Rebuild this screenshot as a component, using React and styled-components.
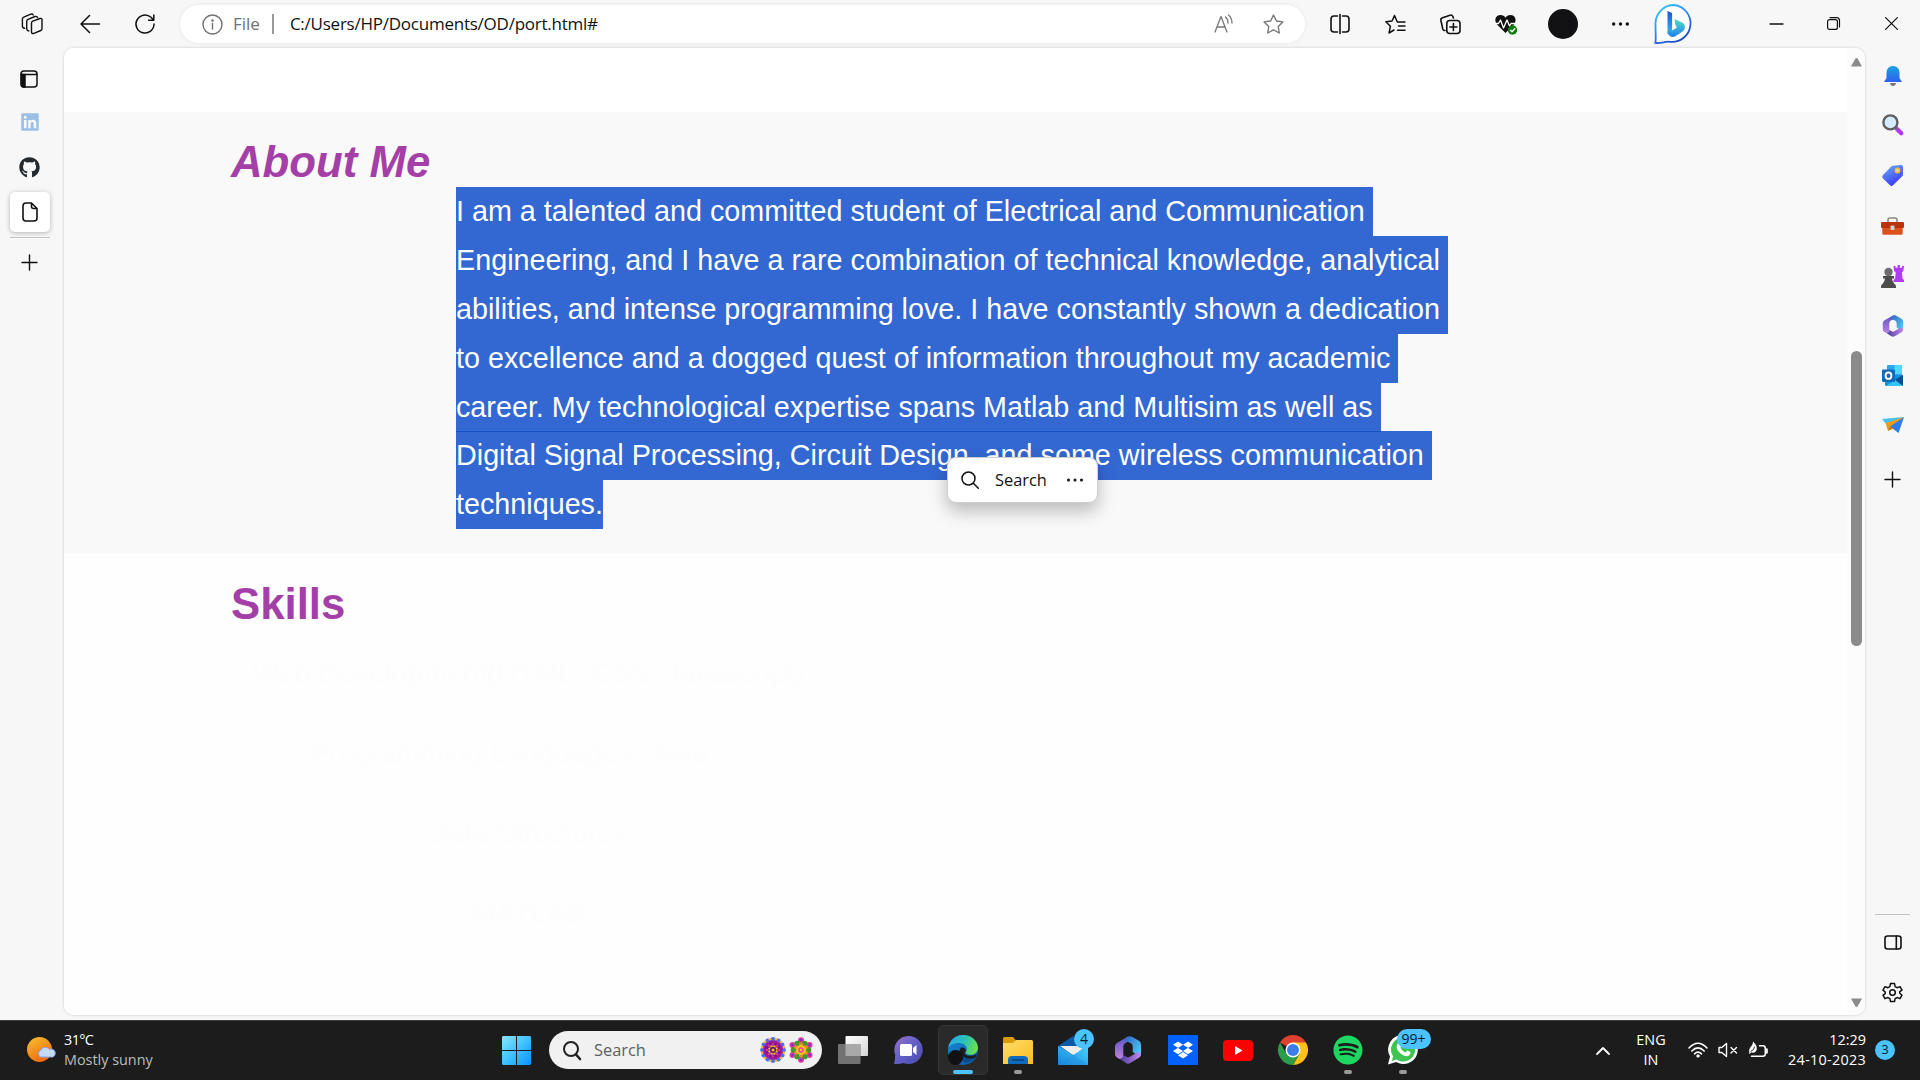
import React from "react";
import styled, { createGlobalStyle } from "styled-components";
import { FaLinkedin, FaGithub, FaSpotify, FaDropbox } from "react-icons/fa";

const UI = `"Open Sans", "Noto Sans", sans-serif`;

const Global = createGlobalStyle`
  * { box-sizing: border-box; }
  html, body { margin: 0; padding: 0; overflow: hidden; }
  body { background: #f7f7f7; font-family: ${UI}; color: #111; }
  svg { display: block; flex: none; overflow: visible; }
`;

const Screen = styled.div`
  width: 1920px;
  height: 1080px;
  display: flex;
  flex-direction: column;
  background: #f7f7f7;
`;

/* ---------- browser header ---------- */
const Header = styled.header`
  height: 48px;
  display: flex;
  align-items: flex-start;
`;
const Cell = styled.div`
  width: ${(p) => p.$w}px;
  height: 47px;
  display: flex;
  align-items: center;
  justify-content: center;
`;
const AddressBar = styled.div`
  width: 1125px;
  height: 38px;
  margin: 5px 0 0 6px;
  padding: 0 21px 0 22px;
  border-radius: 19px;
  background: #fff;
  box-shadow: 0 0 4px rgba(0, 0, 0, 0.07);
  display: flex;
  align-items: center;
`;
const Scheme = styled.span`
  margin-left: 10px;
  font-size: 17px;
  line-height: 37px;
  height: 38px;
  color: #707070;
`;
const Bar = styled.span`
  width: 2px;
  height: 20px;
  margin: 0 16px 0 12px;
  background: #9a9a9a;
`;
const Address = styled.span`
  flex: 1;
  font-size: 17px;
  letter-spacing: -0.24px;
  line-height: 37px;
  height: 38px;
  color: #111;
`;
const AddressActions = styled.div`
  display: flex;
  gap: 30px;
  align-items: center;
`;
const Spacer = styled.div`
  flex: 1;
`;
const Avatar = styled.div`
  width: 30px;
  height: 30px;
  border-radius: 50%;
  background: #121114;
`;

/* ---------- middle ---------- */
const Middle = styled.div`
  height: 972px;
  display: flex;
  align-items: flex-start;
`;
const TabRail = styled.nav`
  width: 64px;
  height: 972px;
  padding: 9px 4px 0 0;
  display: flex;
  flex-direction: column;
  align-items: center;
`;
const RailSlot = styled.div`
  height: ${(p) => p.$h}px;
  width: 40px;
  padding-right: ${(p) => p.$inset || 0}px;
  display: flex;
  align-items: center;
  justify-content: center;
`;
const ActiveTab = styled.div`
  width: 40px;
  height: 40px;
  border-radius: 5px;
  background: #fff;
  box-shadow: 0 1px 5px rgba(0, 0, 0, 0.28);
  display: flex;
  align-items: center;
  justify-content: center;
`;
const RailRule = styled.div`
  width: ${(p) => p.$w}px;
  height: 1px;
  margin-top: ${(p) => p.$top}px;
  background: #c3c3c3;
`;
const Viewport = styled.main`
  width: 1801px;
  height: 967px;
  border-radius: 10px;
  overflow: hidden;
  background: #fff;
  box-shadow: 0 0 3px rgba(0, 0, 0, 0.2);
  display: flex;
`;
const Page = styled.div`
  flex: 1;
  background: #fefefe;
  font-family: "Liberation Sans", Arial, sans-serif;
`;
const TopGap = styled.div`
  height: 64px;
  background: #fff;
`;
const Section = styled.section`
  height: ${(p) => p.$h}px;
  padding: 24px 0 0 167px;
  background: ${(p) => p.$bg};
`;
const Heading = styled.h2`
  margin: 0;
  height: 51px;
  line-height: 51px;
  font-size: 43.75px;
  font-weight: bold;
  font-style: ${(p) => (p.$italic ? "italic" : "normal")};
  color: #a43fa8;
`;
const Paragraph = styled.div`
  margin-left: 225px;
  font-size: 28.742px;
  color: #fff;
  display: flex;
  flex-direction: column;
  align-items: flex-start;
`;
const Line = styled.span`
  position: relative;
  z-index: ${(p) => (p.$overlap ? 1 : 0)};
  height: 49px;
  line-height: 49px;
  margin-bottom: ${(p) => (p.$overlap ? -1 : 0)}px;
  white-space: pre;
  background: #3367d1;
  box-shadow: ${(p) => (p.$overlap ? "inset 0 -1px 0 #1550c4" : "none")};
`;
const SkillList = styled.ul`
  list-style: none;
  width: 600px;
  margin: 20px 0 0 -3px;
  padding: 0;
  font-size: 28.65px;
  color: #fdfdfd;
  text-align: center;
`;
const Skill = styled.li`
  height: 80px;
  line-height: 49px;
`;
const ScrollTrack = styled.div`
  width: 18px;
  background: #fcfcfc;
  display: flex;
  flex-direction: column;
  align-items: center;
  padding-top: 10px;
`;
const ScrollThumb = styled.div`
  width: 11px;
  height: 295px;
  margin: 284px 0 352px;
  border-radius: 6px;
  background: #8b8b8b;
`;
const SideRail = styled.aside`
  width: 55px;
  height: 972px;
  padding: 3px 0 0 0;
  display: flex;
  flex-direction: column;
  align-items: center;
`;
const SideSlot = styled.div`
  height: ${(p) => p.$h || 50}px;
  display: flex;
  align-items: center;
  justify-content: center;
`;

/* ---------- selection popup ---------- */
const Popup = styled.div`
  position: absolute;
  left: 947px;
  top: 457px;
  z-index: 5;
  width: 151px;
  height: 46px;
  padding: 0 13px;
  border-radius: 9px;
  background: #fff;
  border: 1px solid #cfcfcf;
  box-shadow: 0 8px 18px rgba(0, 0, 0, 0.26);
  display: flex;
  align-items: center;
  font-size: 16.4px;
`;
const PopupLabel = styled.span`
  margin: 0 20px 0 16px;
  line-height: 43px;
  height: 44px;
`;

/* ---------- taskbar ---------- */
const Taskbar = styled.footer`
  height: 60px;
  background: #1c1c1c;
  border-top: 1px solid #3b3f40;
  display: flex;
  align-items: center;
  color: #fff;
`;
const Weather = styled.div`
  width: 489px;
  padding-left: 26px;
  gap: 9px;
  display: flex;
  align-items: center;
`;
const TwoLines = styled.div`
  display: flex;
  flex-direction: column;
  align-items: ${(p) => p.$align || "flex-start"};
  width: ${(p) => p.$w || "auto"};
  margin-left: ${(p) => p.$left || 0}px;
  padding-bottom: 2px;
  line-height: 20px;
  font-size: 14.4px;
  color: #fff;
`;
const Muted = styled.span`
  color: #bdbdbd;
`;
const Spaced = styled.span`
  letter-spacing: ${(p) => p.$ls}px;
`;
const AppCell = styled.div`
  width: 55px;
  height: 59px;
  padding: 0 ${(p) => (p.$center ? 0 : 1)}px 1px 0;
  position: relative;
  display: flex;
  align-items: center;
  justify-content: center;
`;
const AppTile = styled.div`
  width: 50px;
  height: 50px;
  border-radius: 5px;
  background: #2a2a2a;
  border: 1px solid #353535;
  display: flex;
  align-items: center;
  justify-content: center;
`;
const Indicator = styled.i`
  position: absolute;
  left: 27px;
  bottom: 6px;
  transform: translateX(-50%);
  width: ${(p) => (p.$active ? 20 : 8)}px;
  height: 4px;
  border-radius: 2px;
  background: ${(p) => (p.$active ? "#4cc2ff" : "#9a9a9a")};
`;
const Badge = styled.b`
  position: absolute;
  left: ${(p) => p.$left}px;
  top: 8px;
  height: 20px;
  width: ${(p) => p.$w}px;
  border-radius: 10px;
  background: #4cc2ff;
  color: #0a1a24;
  font-weight: 400;
  font-size: 14px;
  line-height: 20px;
  text-align: center;
`;
const SearchBox = styled.div`
  width: 273px;
  height: 38px;
  margin: 0 4px 1px 5px;
  padding: 0 9px 0 14px;
  border-radius: 19px;
  background: #f1f1f1;
  display: flex;
  align-items: center;
`;
const SearchLabel = styled.span`
  flex: 1;
  margin-left: 13px;
  font-size: 16.4px;
  line-height: 37px;
  height: 38px;
  color: #5f5f5f;
`;
const Flowers = styled.div`
  display: flex;
  gap: 3px;
`;
const Tray = styled.div`
  display: flex;
  align-items: center;
  gap: 10px;
  margin: 0 19px 1px 22px;
`;
const Count = styled.span`
  width: 20px;
  height: 20px;
  margin: 0 25px 1px 9px;
  border-radius: 50%;
  background: #4cc2ff;
  color: #0a1a24;
  font-size: 12.5px;
  line-height: 20px;
  text-align: center;
`;

/* ---------- icons ---------- */
const Svg = ({ w, h, vb, sw = 1.5, c = "#111", children }) => (
  <svg width={w} height={h || w} viewBox={vb || `0 0 ${w} ${h || w}`} fill="none" stroke={c} strokeWidth={sw} strokeLinecap="round" strokeLinejoin="round">
    {children}
  </svg>
);
const Dots = ({ w = 16, r = 1.7 }) => (
  <Svg w={w} h={4}>
    {[r, w / 2, w - r].map((x) => <circle key={x} cx={x} cy="2" r={r} fill="#111" stroke="none" />)}
  </Svg>
);
const Plus = () => (
  <Svg w={17} sw={1.4}><path d="M8.5 1v15M1 8.5h15" /></Svg>
);
const WorkspacesIcon = () => (
  <Svg w={22} h={22} sw={1.4}>
    <path d="M10.500 10q0-1.400 1.300-1.900l7.200-2.600q2-.5 2 1.300v9q0 1.200-1.200 1.700l-6.900 2.800q-2.400.8-2.400-1.200z" />
    <path d="M7.800 18q-2.100-.3-2.100-2V8.200q0-1.300 1.300-1.800L14 3.500q2-.5 2.600 1" />
    <path d="M3.600 15.300q-2.200-.3-2.200-2V6q0-1.300 1.300-1.800L9.800 1.200q1.700-.5 2.400.8" />
  </Svg>
);
const MagnifierEmoji = () => (
  <Svg w={22} h={22} sw={2.4}>
    <path d="m15 15 4.300 4.300" stroke="#b235f5" strokeWidth="4.200" />
    <path d="m13 13 1.500 1.500" stroke="#777" />
    <circle cx="8.400" cy="8.400" r="7" fill="#d3ecff" stroke="#606060" />
  </Svg>
);
const M365 = ({ s = 26 }) => (
  <svg width={s} height={s} viewBox="0 0 26 28">
    <defs>
      <linearGradient id="ma" x1="0" y1="0" x2="0" y2="1"><stop stopColor="#5a57c9" /><stop offset="1" stopColor="#bd7fe0" /></linearGradient>
      <linearGradient id="mb" x1="0" y1="0" x2="1" y2="1"><stop stopColor="#2f61c6" /><stop offset="1" stopColor="#57d6fb" /></linearGradient>
      <linearGradient id="mc" x1="0" y1="0" x2="1" y2="0"><stop stopColor="#473a9c" /><stop offset="1" stopColor="#c48be8" /></linearGradient>
    </defs>
    <path d="M13 .6 2.300 6.700Q0 8 0 10.600V18q0 2.500 2.200 3.700l2.500 1.300q3.600 0 3.600-4V10.600q0-2.400 2.100-3.600L15 4.400z" fill="url(#ma)" />
    <path d="M13 .6q2-1 4 .2l6.900 4Q26 6.100 26 8.600V17q0 2.300-1.500 3.400L17.700 16v-5.300q0-2.400-2.100-3.600L9.500 4.800q0-2.700 3.500-4.200z" fill="url(#mb)" />
    <path d="M4.700 23q3.600 0 3.600-4l3 1.700q1.700 1 3.400 0L23 16q3 0 3 2.600 0 2-2 3.200l-8.800 5.300q-2.200 1.200-4.400 0z" fill="url(#mc)" />
  </svg>
);
const Bing = () => (
  <svg width="40" height="40" viewBox="0 0 40 40">
    <defs>
      <linearGradient id="br" x1="0" y1="0" x2=".6" y2="1"><stop stopColor="#35d3f4" /><stop offset=".5" stopColor="#2f8df3" /><stop offset="1" stopColor="#1b49c8" /></linearGradient>
      <linearGradient id="bb" x1="0" y1="0" x2="0" y2="1"><stop stopColor="#1e55e0" /><stop offset="1" stopColor="#2fb6f0" /></linearGradient>
      <linearGradient id="bc" x1="0" y1="0" x2="0" y2="1"><stop stopColor="#54dfc2" /><stop offset="1" stopColor="#1f7df0" /></linearGradient>
    </defs>
    <path d="M20 1a18.500 18.500 0 1 1-4 36.800c-5-.8-8 1.800-14.700 1.100.9-3 .2-8 .2-18.900A18.500 18.500 0 0 1 20 1z" fill="#fff" stroke="url(#br)" strokeWidth="1.800" />
    <path d="m13.500 7 4.600 2v17.500l-4.600 3.400z" fill="url(#bb)" />
    <path d="m20.500 15 7.700 3.600q3 1.600 2.700 5-.2 2.600-2.600 4.200l-6.600 4.300q-3 1.600-5.700.2-2.500-1.500-2.500-4.300l1-2.500 3.600 1 4.700-2.700-1.700-3.800z" fill="url(#bc)" />
  </svg>
);
const Edge = () => (
  <svg width="30" height="30" viewBox="0 0 30 30">
    <defs>
      <linearGradient id="ea" x1="0" y1=".2" x2="1" y2=".5"><stop stopColor="#2aa6ee" /><stop offset=".55" stopColor="#2bc3b4" /><stop offset="1" stopColor="#6be04a" /></linearGradient>
      <linearGradient id="eb" x1="0" y1="0" x2="1" y2="1"><stop stopColor="#1689d8" /><stop offset="1" stopColor="#0c59a4" /></linearGradient>
    </defs>
    <circle cx="15" cy="15" r="15" fill="url(#eb)" />
    <path d="M.3 13C1.300 5.500 7.500 0 15 0c9 0 15 6.500 15 12.500 0 4.700-3.500 7.300-7.400 7.300-3 0-5-1-5-2.200 0-.9 1.200-1.400 1.200-3.600 0-3-3-6-8-6-5.500 0-9 2.500-10.500 5z" fill="url(#ea)" />
    <path d="M12 14c-3 4-1 12 6.500 14 4-1 8-4 9.300-7-5 2.500-12.500 1.500-13.500-3.500-.3-2 .5-3 .5-3z" fill="#0b4a8c" />
    <path d="M13.500 12.500c3 0 4.500 1.500 4.300 3.500-.2 1-1.200 1.300-1.200 2.200 0 1.600 3.500 3.300 8 2.400 2-.4 3.500-1.100 4.700-2.200l-2.100 4.400c-6 2.200-14-.4-15.500-5.800 0-2 .4-3.600 1.800-4.500z" fill="#1c1c1c" />
    <circle cx="7.500" cy="22.500" r="7.500" fill="#121114" />
  </svg>
);
const WindowsLogo = () => (
  <svg width="29" height="29" viewBox="0 0 29 29">
    <defs><linearGradient id="wl" gradientUnits="userSpaceOnUse" x1="0" y1="0" x2="29" y2="29"><stop stopColor="#8be4ff" /><stop offset=".5" stopColor="#3fc1ff" /><stop offset="1" stopColor="#0a93fa" /></linearGradient></defs>
    <path d="M1 0h13v14H0V1zM15 0h13l1 1v13H15zM0 15h14v14H1l-1-1zM15 15h14v13l-1 1H15z" fill="url(#wl)" />
  </svg>
);
const petals = (n, r, size, fill, cx = 13, off = 0) =>
  Array.from({ length: n }, (_, i) => {
    const a = ((i * 360) / n + off) * (Math.PI / 180);
    return <circle key={fill + i} cx={cx + r * Math.sin(a)} cy={13 - r * Math.cos(a)} r={size} fill={fill} />;
  });
const FlowerA = () => (
  <svg width="26" height="26" viewBox="0 0 26 26">
    {petals(12, 10.6, 2.3, "#4a6cf0")}
    {petals(12, 11.2, 1.3, "#f5b921", 13, 15)}
    {petals(12, 7.6, 2.5, "#a3179a", 13, 15)}
    <circle cx="13" cy="13" r="7.500" fill="#7b1280" />
    {petals(8, 6, 1.2, "#d935a6")}
    {petals(8, 3.8, 1.2, "#f5c021", 13, 22)}
    <circle cx="13" cy="13" r="3" fill="#5a1a70" />
    <circle cx="13" cy="13" r="1.500" fill="#f5c021" />
  </svg>
);
const FlowerB = () => (
  <svg width="24" height="26" viewBox="0 0 24 26">
    {petals(6, 9.8, 3, "#e0359f", 12)}
    {petals(6, 10, 1.2, "#7a2fd0", 12)}
    {petals(6, 7.4, 2.9, "#3f9a28", 12, 30)}
    {petals(6, 5.6, 2, "#f08a2a", 12)}
    <circle cx="12" cy="13" r="5" fill="#f5c021" />
    <circle cx="12" cy="13" r="2.700" fill="#ee3f9f" />
    <circle cx="12" cy="13" r="1.200" fill="#f7d04a" />
  </svg>
);
const Mail = () => (
  <svg width="30" height="29" viewBox="0 0 30 29">
    <defs><linearGradient id="ml" x1="0" y1="1" x2="1" y2="0"><stop stopColor="#1a7fd6" /><stop offset=".6" stopColor="#34b4f0" /><stop offset="1" stopColor="#45d3f8" /></linearGradient></defs>
    <path d="M0 10 15 0l15 10v6H0z" fill="#0b5aa9" />
    <path d="M2 10h26L16 20z" fill="#eee" />
    <path d="m0 10 15 9 15-9v19H0z" fill="url(#ml)" />
    <path d="m0 29 15-10.500L30 29z" fill="#1f8fe0" opacity=".45" />
  </svg>
);
const Chrome = () => (
  <svg width="30" height="30" viewBox="0 0 30 30">
    <path d="M15 15 2 7.500A15 15 0 0 1 28 7.500z" fill="#e0402f" />
    <path d="M15 7.500h13A15 15 0 0 1 15 30l6.500-11.200z" fill="#fbc116" />
    <path d="M2 7.500A15 15 0 0 0 15 30l6.500-11.200L8.500 18.800z" fill="#2c9c49" />
    <circle cx="15" cy="15" r="7.500" fill="#fff" />
    <circle cx="15" cy="15" r="6" fill="#3b7ded" />
  </svg>
);
const Folder = () => (
  <svg width="30" height="27" viewBox="0 0 30 27">
    <defs><linearGradient id="fo" x1="0" y1="0" x2="1" y2="1"><stop stopColor="#ffdd6b" /><stop offset="1" stopColor="#fbbc1f" /></linearGradient></defs>
    <path d="M0 8V1.500Q0 0 1.500 0H10l3 3.500V8z" fill="#dc9a08" />
    <path d="M0 6h10l3-3h15.500Q30 3 30 4.500V27H0z" fill="url(#fo)" />
    <path d="M5 27v-4q0-4 4-4h12q4 0 4 4v4z" fill="#0f6cbd" />
    <path d="M9.500 23h11" stroke="#0a3f78" strokeWidth="1.500" strokeLinecap="round" />
  </svg>
);

const LINES = [
  "I am a talented and committed student of Electrical and Communication ",
  "Engineering, and I have a rare combination of technical knowledge, analytical ",
  "abilities, and intense programming love. I have constantly shown a dedication ",
  "to excellence and a dogged quest of information throughout my academic ",
  "career. My technological expertise spans Matlab and Multisim as well as ",
  "Digital Signal Processing, Circuit Design, and some wireless communication ",
  "techniques.",
];
const SKILLS = ["Web Development(HTML, CSS, Javascript)", "Programming Languages: Java, C", "Data Structures", "MATLAB"];

function BrowserHeader() {
  return (
    <Header>
      <Cell $w={64}><WorkspacesIcon /></Cell>
      <Cell $w={51}><Svg w={20} h={20}><path d="M1 10h18.500M9.500 1.500 1 10l8.500 8.500" /></Svg></Cell>
      <Cell $w={59}><Svg w={20} h={20}><path d="M19 10a9 9 0 1 1-3-6.700L18.600 6M18.800 1v5.200h-5.200" /></Svg></Cell>
      <AddressBar>
        <Svg w={21} c="#707070" sw={1.4}><circle cx="10.500" cy="10.500" r="9.500" /><path d="M10.500 9.500v5.500" /><circle cx="10.500" cy="6.500" r=".6" fill="#707070" /></Svg>
        <Scheme>File</Scheme>
        <Bar />
        <Address>C:/Users/HP/Documents/OD/port.html#</Address>
        <AddressActions>
          <Svg w={19} h={20} c="#777" sw={1.3}><path d="m1 18 6-15.500L13 18M3 13h8M11.500 3q2.500 2 2.500 6M14.500 1q3.500 3 3.500 8" /></Svg>
          <Svg w={21} h={20} c="#777" sw={1.4}><path d="m10.500 1 2.900 6 6.500.9-4.700 4.600 1.100 6.500-5.800-3.100L4.700 19l1.100-6.500L1.100 7.900l6.500-.9z" /></Svg>
        </AddressActions>
      </AddressBar>
      <Cell $w={69}><Svg w={20} h={20} sw={1.6}><path d="M7.500 2H4Q1 2 1 5v10q0 3 3 3h3.500M12.500 2H16q3 0 3 3v10q0 3-3 3h-3.500M10 .5v19" /></Svg></Cell>
      <Cell $w={43}><Svg w={21} h={20}><path d="M12.300 8 9.500 1.500 7 7 .8 7.800l4.600 4.500L4 19l5-3M12.500 8H20M13.500 12H20M12.500 16.200H20" /></Svg></Cell>
      <Cell $w={67}><Svg w={21} h={20} sw={1.6}><path d="M5 16.500q-1.700.2-2.200-1.500L.9 6.500Q.5 4.300 2.600 3.700L10 1.200q2-.6 2.900 1.300l.5 1.500" /><rect x="6.800" y="6.500" width="13.200" height="13" rx="3" /><path d="M13.400 9.500v7M9.900 13h7" /></Svg></Cell>
      <Cell $w={44}>
        <Svg w={23} h={20} c="none">
          <path d="M10.500 19 2 10.500C-1.500 6 1 1 5.500 1c2.200 0 4 1 5 2.700C11.500 2 13.200 1 15.400 1c4.600 0 7 5 3.600 9.500z" fill="#111" />
          <path d="M0 9.500h3.500l2-3.500 3 8 3.500-8 2.500 6 1.500-2.500h5" stroke="#fff" strokeWidth="1.300" />
          <circle cx="17.500" cy="16" r="4.700" fill="#107c10" />
          <path d="m15.500 16.200 1.500 1.500 2.800-3" stroke="#fff" strokeWidth="1.300" />
        </Svg>
      </Cell>
      <Cell $w={69}><Avatar /></Cell>
      <Cell $w={46}><Dots w={17} /></Cell>
      <Cell $w={61}><Bing /></Cell>
      <Spacer />
      <Cell $w={56}><Svg w={13} h={2} sw={1.3}><path d="M0 1h13" /></Svg></Cell>
      <Cell $w={59}><Svg w={13} h={13} sw={1.2}><rect x=".6" y="2.600" width="9.800" height="9.800" rx="2" /><path d="M3 .6h6.500q3 0 3 3V10" /></Svg></Cell>
      <Cell $w={57}><Svg w={13} h={13} sw={1.2}><path d="m.6.6 11.800 11.800M12.400.6.600 12.400" /></Svg></Cell>
    </Header>
  );
}

function LeftRail() {
  return (
    <TabRail>
      <RailSlot $h={44} $inset={2}><Svg w={18} h={18}><rect x="1" y="1" width="16" height="16" rx="3" /><path d="M1 4.500h16" /><path d="M1.500 4.500H5V17H3.500q-2 0-2-2z" fill="#111" /></Svg></RailSlot>
      <RailSlot $h={42}><FaLinkedin size={20} color="#9bc0e6" /></RailSlot>
      <RailSlot $h={48} $inset={1}><FaGithub size={21} color="#24292e" /></RailSlot>
      <RailSlot $h={1} />
      <ActiveTab><Svg w={16} h={20} sw={1.6}><path d="M9.500 1H4Q1 1 1 4v12q0 3 3 3h8q3 0 3-3V6.500zM9.500 1v3.500q0 2 2 2H15" /></Svg></ActiveTab>
      <RailRule $w={40} $top={5} />
      <RailSlot $h={49} $inset={1}><Plus /></RailSlot>
    </TabRail>
  );
}

function RightRail() {
  return (
    <SideRail>
      <SideSlot>
        <svg width="18" height="20" viewBox="0 0 18 20">
          <defs><linearGradient id="be" x1="0" y1="0" x2="0" y2="1"><stop stopColor="#1ba0e2" /><stop offset="1" stopColor="#2d62ef" /></linearGradient></defs>
          <path d="M6 17h6q-.5 3-3 3t-3-3z" fill="#777" /><path d="M9 0q6.500.3 6.500 7v5L18 16H0l2.500-4V7Q2.500.3 9 0z" fill="url(#be)" />
        </svg>
      </SideSlot>
      <SideSlot $h={48}><MagnifierEmoji /></SideSlot>
      <SideSlot $h={52}>
        <svg width="21" height="21" viewBox="0 0 21 21">
          <defs><linearGradient id="tg" x1="0" y1="0" x2=".5" y2="1"><stop stopColor="#67b2fb" /><stop offset="1" stopColor="#3f3bf2" /></linearGradient></defs>
          <path d="M11 .8 19 0q2 0 2 2v7.500q0 1-.8 1.800L11 20.300q-1.500 1.200-3 0L.8 13.200q-1.300-1.500 0-3L9 1.700q.8-.8 2-.9z" fill="url(#tg)" />
          <circle cx="15.500" cy="5.500" r="2.200" fill="#ead7a0" stroke="#f2bd1d" strokeWidth="1.500" />
        </svg>
      </SideSlot>
      <SideSlot>
        <svg width="23" height="18" viewBox="0 0 23 18">
          <path d="M7 5V3q0-2 2-2h5q2 0 2 2v2" fill="none" stroke="#8a8a8a" strokeWidth="1.600" />
          <rect x="1.300" y="8" width="20.400" height="9.700" rx="1.500" fill="#dd511d" /><rect x="0" y="5" width="23" height="6" rx="1.200" fill="#b9330b" />
          <rect x="9.500" y="8.500" width="4" height="4.500" rx="1" fill="#d0d0d0" />
        </svg>
      </SideSlot>
      <SideSlot>
        <svg width="23" height="23" viewBox="0 0 23 23">
          <path d="M12.500 1h2v1.800h2.100V0h2.300v2.800H21V1h2l-.7 5-1.400 1.300.6 6.200L23 15v2H12.500v-2l1.700-1.500.5-6.200L13 6z" fill="#b13cf5" />
          <circle cx="7.500" cy="7" r="4.200" fill="#6d6d6d" /><path d="M2 11h11v2.500h-2q0 3 2.500 5.500 1.500.5 1.500 2.500V23H0v-1.500Q0 19.500 1.500 19 4 16.500 4 13.500H2z" fill="#4d4d4d" />
        </svg>
      </SideSlot>
      <SideSlot><M365 s={22} /></SideSlot>
      <SideSlot $h={49}>
        <svg width="21" height="21" viewBox="0 0 21 21">
          <rect x="5" y="0" width="15" height="12" rx="1" fill="#28a8ea" /><rect x="12.500" y="0" width="7.500" height="9" fill="#50d9ff" />
          <path d="M3 10h18v9.500q0 1.500-1.500 1.500h-15Q3 21 3 19.500z" fill="#1490df" /><path d="m21 10-9 5.500L21 21z" fill="#0a4f93" /><path d="m4 21 9-6 8 6z" fill="#36c3f2" />
          <rect y="4.500" width="13" height="12.500" rx="1.200" fill="#0f6cbd" /><ellipse cx="6.500" cy="10.700" rx="2.900" ry="3.200" fill="none" stroke="#fff" strokeWidth="1.900" />
        </svg>
      </SideSlot>
      <SideSlot $h={49}>
        <svg width="22" height="16" viewBox="0 0 22 16">
          <path d="M0 2 22 0 5 8z" fill="#41c4f3" /><path d="m3.500 6 2.500 8L9 10.500 22 0z" fill="#f29b14" /><path d="M8 9.500 22 0l-5.500 16z" fill="#2b7de8" /><path d="m6 14 2-4.500 3.500 2z" fill="#c97908" />
        </svg>
      </SideSlot>
      <SideSlot $h={60}><Plus /></SideSlot>
      <Spacer />
      <RailRule $w={35} $top={0} />
      <SideSlot $h={55}><Svg w={18} h={15} sw={1.6}><rect x="1" y="1" width="16" height="13" rx="2.500" /><path d="M12.300 1v13" /></Svg></SideSlot>
      <SideSlot $h={44}>
        <Svg w={21} h={21} vb="0 0 24 24" sw={1.7}>
          <circle cx="12" cy="12" r="3.200" />
          <path d="M9.700 1.800 9 5.200 6.800 6.500l-3.400-1.200L1.100 9.300 3.700 11.600v1.800L1.100 15.100l2.300 3.900 3.400-1.200L9 19.100l.7 3.300h4.600l.7-3.300 2.200-1.300 3.400 1.200 2.300-3.900-2.600-2.300v-1.800l2.600-1.700-2.300-4-3.400 1.200L15 5.200l-.7-3.400z" />
        </Svg>
      </SideSlot>
      <SideSlot $h={6} />
    </SideRail>
  );
}

function WindowsTaskbar() {
  return (
    <Taskbar>
      <Weather>
        <svg width="29" height="28" viewBox="0 0 29 28">
          <defs><linearGradient id="su" x1="0" y1="0" x2=".6" y2="1"><stop stopColor="#f3c231" /><stop offset="1" stopColor="#f26a10" /></linearGradient></defs>
          <circle cx="13.500" cy="12.500" r="12.500" fill="url(#su)" />
          <path d="M14.500 20a4 4 0 0 1 .3-7 5 5 0 0 1 8.500-.6 4 4 0 0 1 3.500 7.600z" fill="#c4daf9" stroke="#83a5e6" strokeWidth="1" />
        </svg>
        <TwoLines><Spaced $ls={-0.6}>31°C</Spaced><Muted>Mostly sunny</Muted></TwoLines>
      </Weather>
      <AppCell $center><WindowsLogo /></AppCell>
      <SearchBox>
        <Svg w={18} h={19} sw={2} c="#222"><circle cx="8" cy="8" r="7" /><path d="m13 13.500 4 4.500" strokeWidth="2.600" /></Svg>
        <SearchLabel>Search</SearchLabel>
        <Flowers><FlowerA /><FlowerB /></Flowers>
      </SearchBox>
      <AppCell>
        <svg width="30" height="28" viewBox="0 0 30 28">
          <defs><linearGradient id="tv" x1="0" y1="0" x2="1" y2="1"><stop stopColor="#fff" /><stop offset="1" stopColor="#d5d5d5" /></linearGradient></defs>
          <rect x="7.500" y="0" width="22.500" height="20" rx="1" fill="url(#tv)" /><rect x="0" y="8" width="22.500" height="20" rx="1" fill="#727272" /><rect x="7.500" y="8" width="15" height="12" fill="#a9a9a9" />
        </svg>
      </AppCell>
      <AppCell>
        <svg width="29" height="28" viewBox="0 0 29 28">
          <defs><linearGradient id="ch" x1="0" y1="0" x2="1" y2="1"><stop stopColor="#9a6fd0" /><stop offset=".5" stopColor="#5f5fc4" /><stop offset="1" stopColor="#4b4aae" /></linearGradient></defs>
          <path d="M14.500 0a14 14 0 1 1-5 27q-4 1.500-9.500.7Q1.300 24 1.200 19A14 14 0 0 1 14.500 0z" fill="url(#ch)" />
          <rect x="6" y="8" width="12" height="12" rx="1.500" fill="#fff" /><path d="m19 12 3.500-3v10L19 16z" fill="#fff" />
        </svg>
      </AppCell>
      <AppCell><AppTile><Edge /></AppTile><Indicator $active /></AppCell>
      <AppCell><Folder /><Indicator /></AppCell>
      <AppCell><Mail /><Badge $left={28} $w={20}>4</Badge></AppCell>
      <AppCell><M365 s={28} /></AppCell>
      <AppCell>
        <svg width="30" height="30" viewBox="0 0 30 30"><rect width="30" height="30" fill="#0061fe" /><FaDropbox x="5" y="5" size={20} color="#fff" /></svg>
      </AppCell>
      <AppCell>
        <svg width="30" height="21" viewBox="0 0 30 21"><rect width="30" height="21" rx="4" fill="#f00" /><path d="m12 6 7.500 4.500L12 15z" fill="#fff" /></svg>
      </AppCell>
      <AppCell><Chrome /></AppCell>
      <AppCell><FaSpotify size={30} color="#1ed760" /><Indicator /></AppCell>
      <AppCell>
        <svg width="30" height="30" viewBox="0 0 30 30">
          <path d="M15.500 0A14.500 14.500 0 1 1 8 27L0 29.500 2 21.500A14.500 14.500 0 0 1 15.500 0z" fill="#fff" />
          <path d="M15.500 2.500A12 12 0 1 1 8.600 24.500L3.800 26l1.300-4.800A12 12 0 0 1 15.500 2.500z" fill="#3fc351" />
          <path d="M11 7.500q1.200-.4 1.800 1l.9 2.200-1.300 2q1.800 3.500 5.300 4.800l1.700-1.900 3 1.500q.6 2.600-1.700 3.700-3 1.300-7.500-1.800-4.500-3.500-4.600-7.500.2-2.800 2.400-4z" fill="#fff" />
        </svg>
        <Badge $left={20.5} $w={34}>99+</Badge><Indicator />
      </AppCell>
      <Spacer />
      <Svg w={14} h={8} sw={1.8} c="#fff"><path d="m1 7 6-6 6 6" /></Svg>
      <TwoLines $align="center" $w="30px" $left={26}><span>ENG</span><span>IN</span></TwoLines>
      <Tray>
        <Svg w={20} h={16} sw={1.6} c="#fff"><path d="M1 6q9-9.500 18 0M3.800 9q6.200-6.300 12.400 0M6.500 11.800q3.500-3.200 7 0" /><circle cx="10" cy="14" r="1.200" fill="#fff" strokeWidth="1" /></Svg>
        <Svg w={20} h={16} sw={1.4} c="#fff"><path d="M1 5.500h2.800L8.500 1.500v13l-4.700-4H1zM13 5.500l5.500 5.500M18.500 5.500 13 11" /></Svg>
        <Svg w={21} h={17} sw={1.5} c="#fff"><path d="M11.500 3.800h3.300q2.500 0 2.500 2.500v5.500q0 2.500-2.500 2.500H3.500" /><path d="M18.800 7.300v3.500" strokeWidth="2" /><path d="M5.500.3q3.500 3.200 3 7.200-.8 2.800-3.300 3-1 0-1.700-.4l-2 1.400q-.8-3.500 1-6Q4.500 4 5.500.3z" fill="#fff" strokeWidth=".6" /><path d="M3 9.300q3-.8 3.600-4.300" stroke="#1c1c1c" strokeWidth=".9" /></Svg>
      </Tray>
      <TwoLines $align="flex-end" $w="78px"><span>12:29</span><Spaced $ls={0.28}>24-10-2023</Spaced></TwoLines>
      <Count>3</Count>
    </Taskbar>
  );
}

export default function App() {
  return (
    <Screen>
      <Global />
      <BrowserHeader />
      <Middle>
        <LeftRail />
        <Viewport>
          <Page>
            <TopGap />
            <Section $h={442} $bg="#f9f9f9">
              <Heading $italic>About Me</Heading>
              <Paragraph>
                {LINES.map((t, i) => <Line key={t} $overlap={i === 4}>{t}</Line>)}
              </Paragraph>
            </Section>
            <Section $h={461} $bg="#fefefe">
              <Heading>Skills</Heading>
              <SkillList>{SKILLS.map((s) => <Skill key={s}>{s}</Skill>)}</SkillList>
            </Section>
          </Page>
          <ScrollTrack>
            <Svg w={11} h={9} c="none"><path d="M5.500 0q.8 0 1.200.7L11 8.500H0L4.300.7Q4.700 0 5.500 0z" fill="#8b8b8b" /></Svg>
            <ScrollThumb />
            <Svg w={11} h={9} c="none"><path d="M5.500 9q.8 0 1.200-.7L11 .5H0l4.300 7.800Q4.700 9 5.500 9z" fill="#8b8b8b" /></Svg>
          </ScrollTrack>
        </Viewport>
        <RightRail />
      </Middle>
      <WindowsTaskbar />
      <Popup>
        <Svg w={18} h={18} sw={1.5}><circle cx="7.500" cy="7.500" r="6.500" /><path d="m12.300 12.300 5 5" /></Svg>
        <PopupLabel>Search</PopupLabel>
        <Dots w={16} r={1.5} />
      </Popup>
    </Screen>
  );
}
